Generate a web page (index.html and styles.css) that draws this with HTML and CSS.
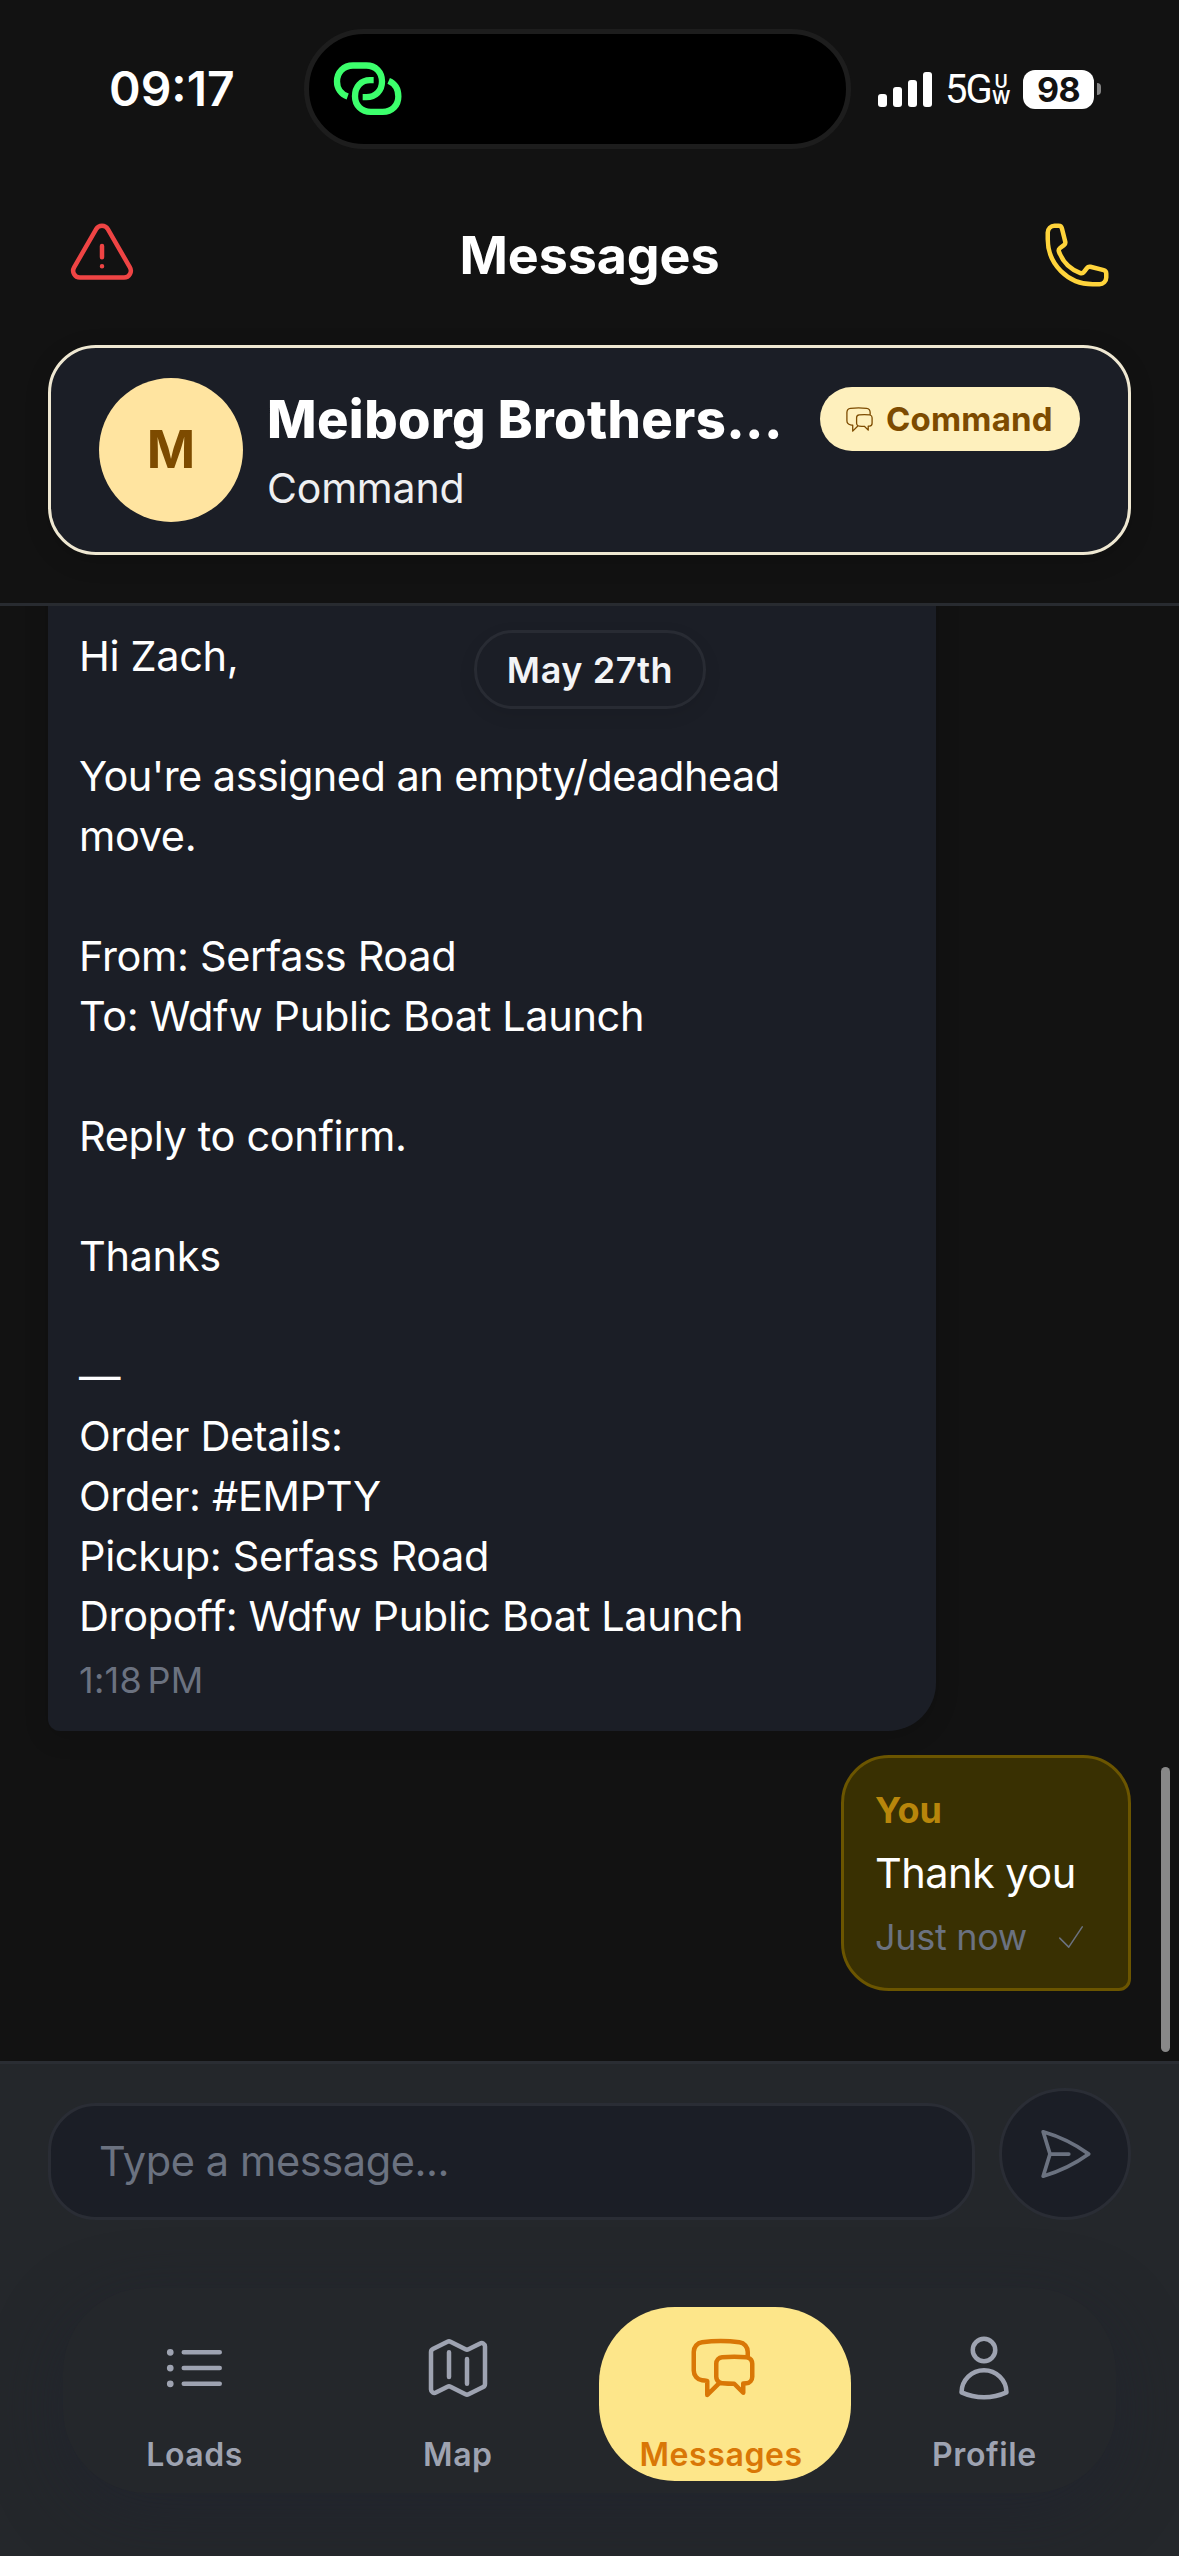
FILE: index.html
```html
<!DOCTYPE html>
<html lang="en">
<head>
<meta charset="utf-8">
<title>Messages</title>
<link rel="stylesheet" href="styles.css">
</head>
<body>
<div class="screen">
  <div class="status">
    <div class="clock"><span>09:17</span></div>
    <div class="island">
      <svg class="link-icon" viewBox="100 120 210 170" fill="none" stroke="currentColor" stroke-width="19"><path d="M144 229C124 222 112 205 112 184C112 156 132 136 160 136H200C228 136 247 156 247 184C247 211 228 231 200 231H189"/><path d="M222 180H211C184 180 166 200 166 228C166 256 186 275 213 275H249C277 275 296 256 296 229C296 207 286 190 267 182"/></svg>
    </div>
    <div class="indicators">
      <div class="signal"><i class="b1"></i><i class="b2"></i><i class="b3"></i><i class="b4"></i></div>
      <div class="network"><span class="gen">5G</span><span class="uw"><span>U</span><span>W</span></span></div>
      <div class="battery">98</div>
      <div class="nub"></div>
    </div>
  </div>

  <header class="header">
    <div class="title-row">
      <svg class="icon alert" viewBox="0 0 24 24"><path d="M12 9v3.75m-9.303 3.376c-.866 1.5.217 3.374 1.948 3.374h14.71c1.73 0 2.813-1.874 1.948-3.374L13.949 3.378c-.866-1.5-3.032-1.5-3.898 0L2.697 16.126zM12 15.75h.007v.008H12v-.008z"/></svg>
      <h1 class="title">Messages</h1>
      <svg class="icon phone" viewBox="0 0 24 24"><path d="M2.25 6.75c0 8.284 6.716 15 15 15h2.25a2.25 2.25 0 002.25-2.25v-1.372c0-.516-.351-.966-.852-1.091l-4.423-1.106c-.44-.11-.902.055-1.173.417l-.97 1.293c-.282.376-.769.542-1.21.38a12.035 12.035 0 01-7.143-7.143c-.162-.441.004-.928.38-1.21l1.293-.97c.363-.271.527-.734.417-1.173L6.963 3.102a1.125 1.125 0 00-1.091-.852H4.5A2.25 2.25 0 002.25 4.5v2.25z"/></svg>
    </div>
    <div class="contact">
      <div class="avatar">M</div>
      <div class="contact-body">
        <div class="name-row">
          <span class="name">Meiborg Brothers...</span>
          <span class="badge">
            <svg class="icon badge-icon" viewBox="0 0 24 24"><path d="M20.25 8.511c.884.284 1.5 1.128 1.5 2.097v4.286c0 1.136-.847 2.1-1.98 2.193-.34.027-.68.052-1.02.072v3.091l-3-3c-1.354 0-2.694-.055-4.02-.163a2.115 2.115 0 01-.825-.242m9.345-8.334a2.126 2.126 0 00-.476-.095 48.64 48.64 0 00-8.048 0c-1.131.094-1.976 1.057-1.976 2.192v4.286c0 .837.46 1.58 1.155 1.951m9.345-8.334V6.637c0-1.621-1.152-3.026-2.76-3.235A48.455 48.455 0 0011.25 3c-2.115 0-4.198.137-6.24.402-1.608.209-2.76 1.614-2.76 3.235v6.226c0 1.621 1.152 3.026 2.76 3.235.577.075 1.157.14 1.74.194V21l4.155-4.155"/></svg>
            <span>Command</span>
          </span>
        </div>
        <div class="role">Command</div>
      </div>
    </div>
  </header>

  <main class="chat">
    <div class="bubble incoming">
      <p class="line">Hi Zach,</p>
      <p class="line gap tight">You're assigned an empty/deadhead</p>
      <p class="line">move.</p>
      <p class="line gap">From: Serfass Road</p>
      <p class="line">To: Wdfw Public Boat Launch</p>
      <p class="line gap">Reply to confirm.</p>
      <p class="line gap">Thanks</p>
      <p class="line gap">—</p>
      <p class="line">Order Details:</p>
      <p class="line">Order: #EMPTY</p>
      <p class="line">Pickup: Serfass Road</p>
      <p class="line">Dropoff: Wdfw Public Boat Launch</p>
      <div class="time stamp">1:18 PM</div>
    </div>
    <div class="bubble outgoing">
      <div class="sender">You</div>
      <p class="line tight">Thank you</p>
      <div class="time"><span>Just now</span><svg class="icon check" viewBox="0 0 24 24"><path d="M4.5 12.75l6 6 9-13.5"/></svg></div>
    </div>
    <div class="date-chip">May 27th</div>
    <div class="scrollbar"></div>
  </main>

  <footer class="footer">
    <div class="composer">
      <div class="input">Type a message...</div>
      <div class="send"><svg class="icon" viewBox="0 0 24 24"><path d="M6 12L3.269 3.126A59.768 59.768 0 0121.485 12 59.77 59.77 0 013.27 20.876L5.999 12zm0 0h7.5"/></svg></div>
    </div>
    <nav class="tabs">
      <div class="tab">
        <svg class="icon" viewBox="0 0 24 24"><path d="M8.25 6.75h12M8.25 12h12m-12 5.25h12M3.75 6.75h.007v.008H3.75V6.75zm.375 0a.375.375 0 11-.75 0 .375.375 0 01.75 0zM3.75 12h.007v.008H3.75V12zm.375 0a.375.375 0 11-.75 0 .375.375 0 01.75 0zm-.375 5.25h.007v.008H3.75v-.008zm.375 0a.375.375 0 11-.75 0 .375.375 0 01.75 0z"/></svg>
        <span>Loads</span>
      </div>
      <div class="tab">
        <svg class="icon" viewBox="0 0 24 24"><path d="M9 6.75V15m6-6v8.25m.503 3.498l4.875-2.437c.381-.19.622-.58.622-1.006V4.82c0-.836-.88-1.38-1.628-1.006l-3.869 1.934c-.317.159-.69.159-1.006 0L9.503 3.252a1.125 1.125 0 00-1.006 0L3.622 5.689C3.24 5.88 3 6.27 3 6.695V19.18c0 .836.88 1.38 1.628 1.006l3.869-1.934c.317-.159.69-.159 1.006 0l4.994 2.497c.317.158.69.158 1.006 0z"/></svg>
        <span>Map</span>
      </div>
      <div class="tab active">
        <svg class="icon" viewBox="0 0 24 24"><path d="M20.25 8.511c.884.284 1.5 1.128 1.5 2.097v4.286c0 1.136-.847 2.1-1.98 2.193-.34.027-.68.052-1.02.072v3.091l-3-3c-1.354 0-2.694-.055-4.02-.163a2.115 2.115 0 01-.825-.242m9.345-8.334a2.126 2.126 0 00-.476-.095 48.64 48.64 0 00-8.048 0c-1.131.094-1.976 1.057-1.976 2.192v4.286c0 .837.46 1.58 1.155 1.951m9.345-8.334V6.637c0-1.621-1.152-3.026-2.76-3.235A48.455 48.455 0 0011.25 3c-2.115 0-4.198.137-6.24.402-1.608.209-2.76 1.614-2.76 3.235v6.226c0 1.621 1.152 3.026 2.76 3.235.577.075 1.157.14 1.74.194V21l4.155-4.155"/></svg>
        <span>Messages</span>
      </div>
      <div class="tab">
        <svg class="icon" viewBox="0 0 24 24"><path d="M15.75 6a3.75 3.75 0 11-7.5 0 3.75 3.75 0 017.5 0zM4.501 20.118a7.5 7.5 0 0114.998 0A17.933 17.933 0 0112 21.75c-2.676 0-5.216-.584-7.499-1.632z"/></svg>
        <span>Profile</span>
      </div>
    </nav>
  </footer>
</div>
</body>
</html>
```
FILE: styles.css
```css
* { box-sizing: border-box; }

body {
  margin: 0;
  background: #121212;
  font-family: Inter, "Liberation Sans", sans-serif;
  color: #fff;
}

.screen {
  width: 1179px;
  height: 2556px;
  display: flex;
  flex-direction: column;
  overflow: hidden;
}

.icon {
  width: 72px;
  height: 72px;
  flex: none;
  display: block;
  fill: none;
  stroke: currentColor;
  stroke-width: 1.5;
  stroke-linecap: round;
  stroke-linejoin: round;
}

/* Status bar */
.status {
  height: 178px;
  flex: none;
  display: grid;
  grid-template-columns: 304px 547px 1fr;
  align-items: center;
}

.clock {
  padding-left: 109px;
  font-size: 48px;
  font-weight: 600;
  line-height: 60px;
}

.island {
  height: 120px;
  border: 5px solid #1d1d1d;
  border-radius: 60px;
  background: #000;
  padding: 26px 24px;
}

.link-icon {
  display: block;
  width: 70px;
  height: 57px;
  color: #3cff6c;
}

.indicators {
  display: flex;
  align-items: center;
  padding-left: 27px;
}

.signal {
  display: flex;
  align-items: flex-end;
  gap: 6px;
  width: 54px;
  height: 35px;
}

.signal i {
  width: 9px;
  border-radius: 3px;
  background: #fff;
}

.b1 { height: 13px; }
.b2 { height: 20px; }
.b3 { height: 27px; }
.b4 { height: 35px; }

.network {
  display: flex;
  align-items: center;
  gap: 3px;
  width: 62px;
  margin: 2px 2px 0 13px;
}

.gen {
  font-family: Roboto, sans-serif;
  font-size: 40px;
  line-height: 40px;
  letter-spacing: -2px;
}

.uw {
  display: flex;
  flex-direction: column;
  align-items: center;
  font-size: 18px;
  font-weight: 600;
  line-height: 16px;
  width: 15px;
}

.battery {
  width: 71px;
  height: 39px;
  margin-left: 14px;
  border-radius: 12px;
  background: #fff;
  color: #121212;
  font-size: 34px;
  font-weight: 700;
  line-height: 39px;
  letter-spacing: -0.5px;
  text-align: center;
}

.nub {
  width: 4px;
  height: 12px;
  margin-left: 3px;
  border-radius: 0 4px 4px 0;
  background: #858585;
}

/* Header */
.header {
  height: 428px;
  flex: none;
  padding: 41px 48px 0;
  border-bottom: 3px solid #282b30;
}

.title-row {
  display: flex;
  align-items: center;
  justify-content: space-between;
  height: 72px;
  padding: 0 18px;
}

.alert { color: #ef4444; }
.phone { color: #ffd43b; }

.title {
  margin: 0;
  padding-top: 2px;
  font-size: 52px;
  font-weight: 700;
  line-height: 72px;
  letter-spacing: -0.1px;
}

.contact {
  display: flex;
  align-items: center;
  gap: 24px;
  height: 210px;
  margin-top: 54px;
  padding: 0 48px;
  border: 3px solid #efe8d2;
  border-radius: 48px;
  background: #1b1e26;
  box-shadow: 0 6px 24px rgba(0, 0, 0, .15);
}

.avatar {
  width: 144px;
  height: 144px;
  flex: none;
  border-radius: 50%;
  background: #ffe4a0;
  color: #7d4b00;
  font-size: 52px;
  font-weight: 700;
  line-height: 144px;
  text-align: center;
}

.contact-body {
  flex: 1;
  padding-top: 2px;
}

.name-row {
  display: flex;
  justify-content: space-between;
}

.name {
  font-size: 52.5px;
  font-weight: 800;
  line-height: 64px;
  letter-spacing: 0.4px;
  white-space: nowrap;
}

.badge {
  display: flex;
  align-items: center;
  gap: 11px;
  height: 64px;
  width: 260px;
  flex: none;
  padding-left: 24px;
  border-radius: 32px;
  background: #fef0bd;
  color: #7d4b00;
  font-size: 33px;
  font-weight: 700;
  letter-spacing: 0.2px;
}

.badge-icon {
  width: 31px;
  height: 31px;
  stroke-width: 1;
}

.role {
  margin-top: 10px;
  font-size: 41px;
  line-height: 54px;
  letter-spacing: -0.2px;
  color: #eeeff1;
}

/* Conversation */
.chat {
  position: relative;
  flex: 1;
  min-height: 0;
  overflow: hidden;
  display: flex;
  flex-direction: column;
  justify-content: flex-end;
  gap: 24px;
  padding: 0 48px 70px;
}

.bubble { flex: none; }

.incoming {
  width: 888px;
  padding: 90px 30px 27px 31px;
  border-radius: 48px 48px 48px 12px;
  background: #1b1e26;
  box-shadow: 0 6px 24px rgba(0, 0, 0, .15);
}

.outgoing {
  align-self: flex-end;
  width: 290px;
  padding: 28px 30px 27px 31px;
  border: 3px solid #6b5500;
  border-radius: 48px 48px 12px 48px;
  background: #393002;
}

.line {
  width: fit-content;
  margin: 0;
  font-size: 41.5px;
  line-height: 60px;
  letter-spacing: -0.36px;
  white-space: nowrap;
}

.gap { margin-top: 60px; }
.tight { letter-spacing: -0.54px; }

.sender {
  margin-bottom: 9px;
  font-size: 36px;
  font-weight: 700;
  line-height: 48px;
  color: #b8860b;
}

.time {
  display: flex;
  align-items: center;
  justify-content: space-between;
  margin-top: 10px;
  font-size: 36px;
  line-height: 48px;
  letter-spacing: -0.3px;
  color: #6b7280;
}

.stamp {
  letter-spacing: 0.3px;
  word-spacing: -5px;
}

.check {
  width: 36px;
  height: 36px;
  margin-right: 9px;
  stroke-width: 1;
}

.date-chip {
  position: absolute;
  top: 24px;
  left: 474px;
  width: 232px;
  height: 79px;
  border: 3px solid #282b33;
  border-radius: 39px;
  background: #1b1e26;
  color: #f3f4f6;
  font-size: 36px;
  font-weight: 600;
  line-height: 74px;
  letter-spacing: 0.6px;
  text-align: center;
  box-shadow: 0 6px 18px rgba(0, 0, 0, .08);
}

.scrollbar {
  position: absolute;
  top: 1161px;
  right: 9px;
  width: 9px;
  height: 285px;
  border-radius: 5px;
  background: #888;
}

/* Composer and tab bar */
.footer {
  height: 495px;
  flex: none;
  padding: 24px 48px 0;
  border-top: 3px solid #2a2d33;
  background: #24272b;
}

.composer {
  display: flex;
  align-items: flex-end;
  justify-content: space-between;
}

.input {
  width: 927px;
  height: 117px;
  padding-left: 48px;
  border: 3px solid #2a2d35;
  border-radius: 48px;
  background: #1b1e26;
  color: #6b7280;
  font-size: 41.5px;
  line-height: 111px;
  letter-spacing: -0.4px;
}

.send {
  width: 132px;
  height: 132px;
  display: flex;
  align-items: center;
  justify-content: center;
  border: 3px solid #2a2d35;
  border-radius: 50%;
  background: #1b1e26;
  color: #6b7280;
}

.send .icon {
  width: 60px;
  height: 60px;
}

.tabs {
  display: grid;
  grid-template-columns: repeat(4, 1fr);
  height: 205px;
  margin: 68px 15px 0;
  border-radius: 84px;
  background: #24272b;
  box-shadow: 0 18px 66px rgba(31, 34, 48, .55);
}

.tab {
  position: relative;
  display: flex;
  flex-direction: column;
  align-items: center;
  padding-top: 44px;
  color: #9ea3b1;
  font-size: 32px;
  font-weight: 600;
  letter-spacing: 0.6px;
}

.tab .icon,
.tab span { position: relative; }

.tab span {
  margin-top: 31px;
  line-height: 40px;
}

.active { color: #d97706; }

.active .icon { margin-left: 3px; }

.active::before {
  content: "";
  position: absolute;
  top: 19px;
  left: 9px;
  width: 252px;
  height: 174px;
  border-radius: 76px;
  background: #fde68a;
}
```
